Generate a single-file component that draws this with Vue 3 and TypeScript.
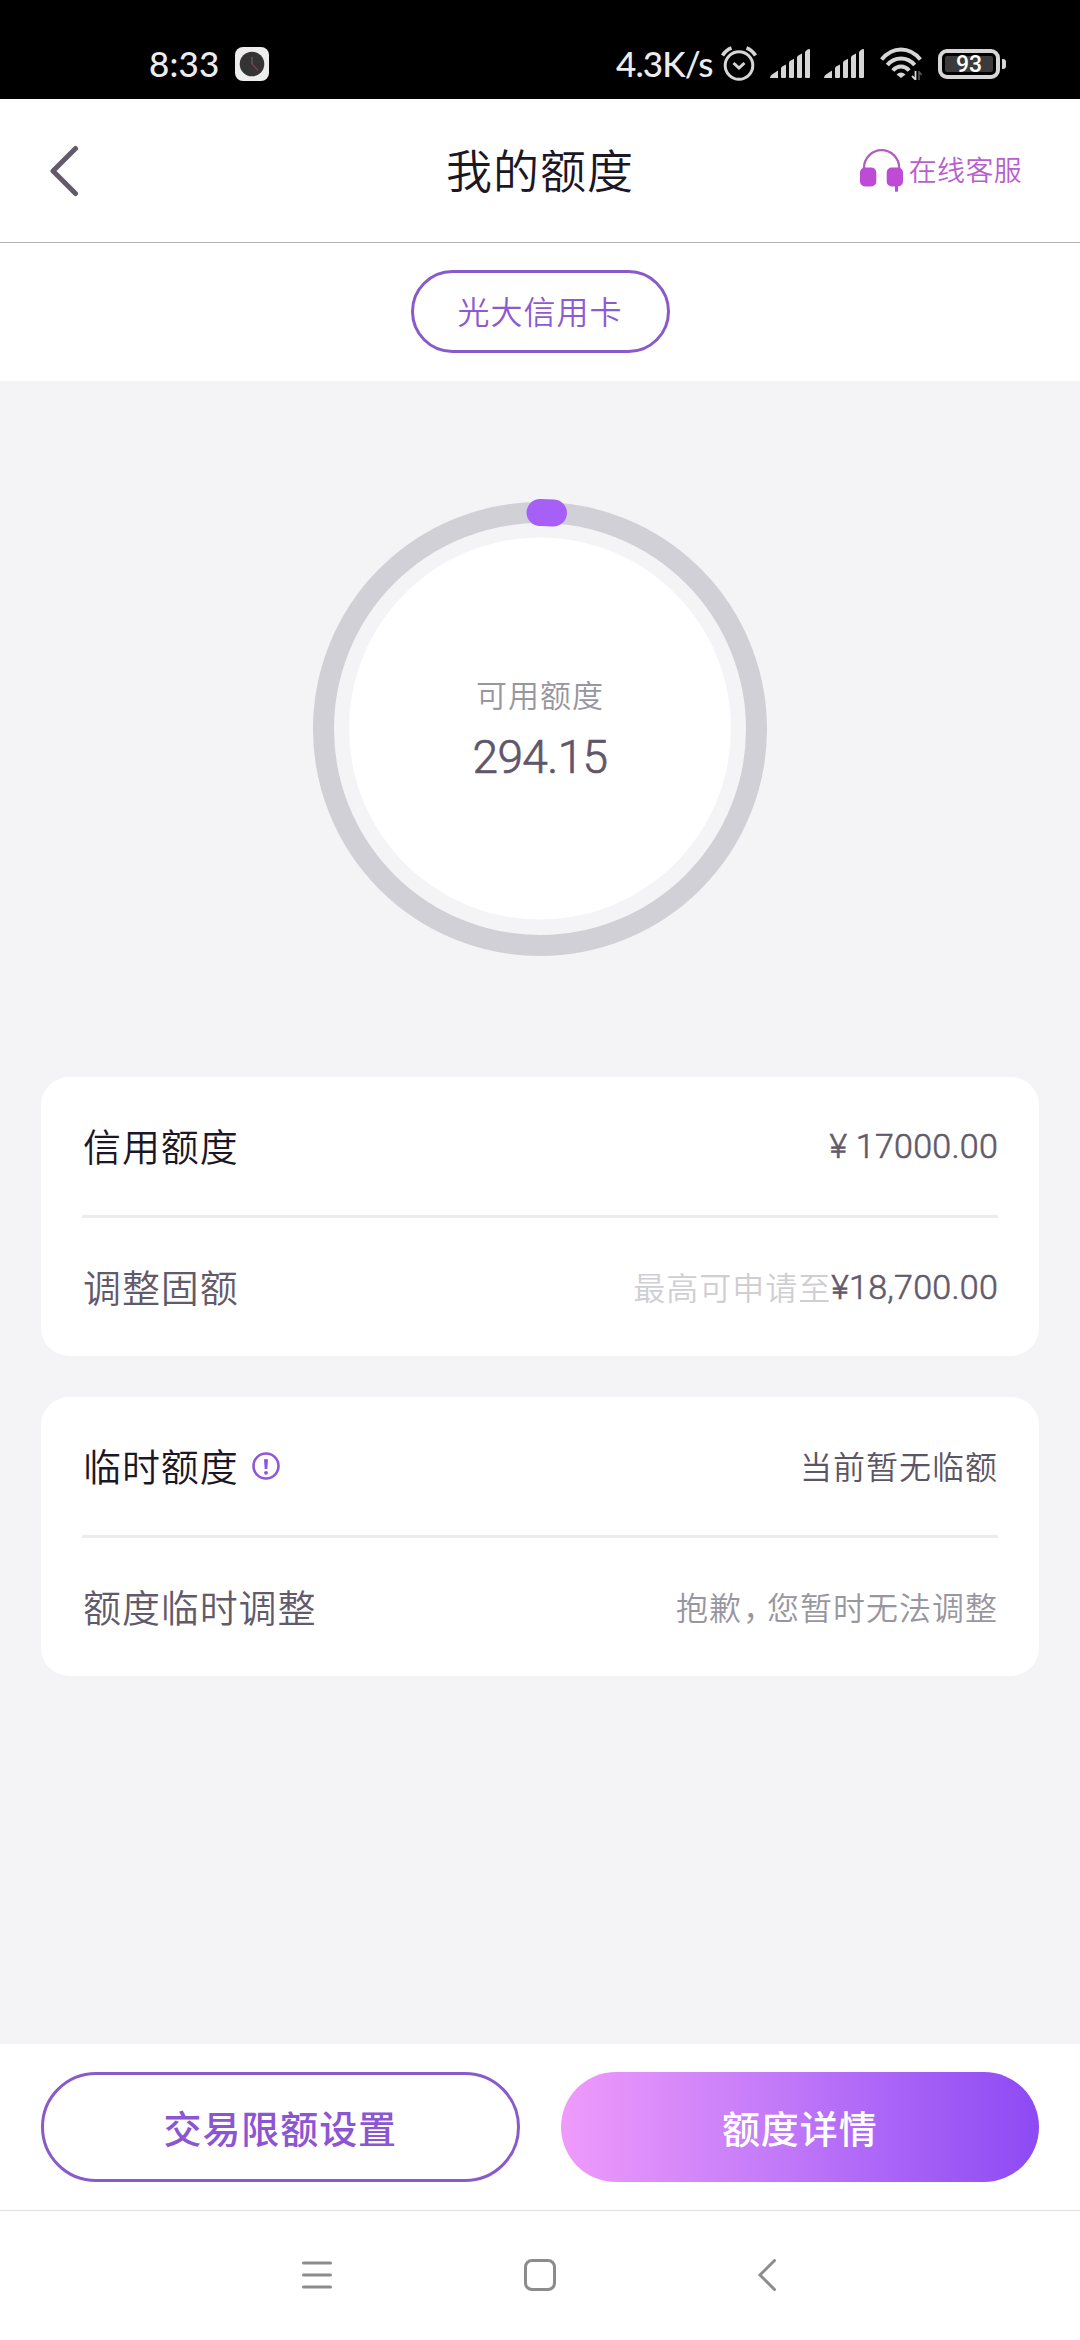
<script setup lang="ts">
import { ref } from 'vue'

interface Row {
  label: string
  value: string
  strong?: boolean
  info?: boolean
  hint?: string
  tone: 'amount' | 'text' | 'muted'
}

const time = ref('8:33')
const available = ref('294.15')

const cards: Row[][] = [
  [
    { label: '信用额度', value: '¥ 17000.00', strong: true, tone: 'amount' },
    { label: '调整固额', hint: '最高可申请至', value: '¥18,700.00', tone: 'amount' },
  ],
  [
    { label: '临时额度', value: '当前暂无临额', strong: true, info: true, tone: 'text' },
    { label: '额度临时调整', value: '抱歉，您暂时无法调整', tone: 'muted' },
  ],
]

const splitComma = (s: string): string[] => s.split(/(，)/)
</script>

<template>
  <div class="screen">
    <div class="status">
      <span class="time">{{ time }}</span>
      <svg class="clock-app" width="34" height="34" viewBox="0 0 34 34">
        <rect width="34" height="34" rx="8" fill="#ededed" />
        <circle cx="17" cy="17" r="12.3" fill="#353334" />
        <path d="M17 17V10" stroke="#5a5859" stroke-width="1.6" />
        <path d="M17 17L23 23.5" stroke="#7a3f45" stroke-width="1.4" />
      </svg>
      <span class="speed">4.3K/s</span>
      <svg class="alarm" width="36" height="36" viewBox="0 0 36 36" fill="none" stroke="#d6d6d6" stroke-width="3">
        <circle cx="18" cy="19.5" r="13.8" />
        <path d="M1.5 9.5Q5 4 10.500 2M34.500 9.500Q31 4 25.500 2" stroke-width="3.600" />
        <path d="M12.500 17L18 22L23.500 17" stroke-width="3" />
      </svg>
      <svg v-for="n in 2" :key="n" class="signal" width="41" height="30" viewBox="0 0 41 30" fill="#d6d6d6">
        <path d="M0 29Q0 26.500 2 25.500L8 21.500V29ZM11 19.500Q11 18 12.500 17.300L16 15.500V28Q16 29 15 29H12Q11 29 11 28ZM19 14Q19 12.500 20.300 11.800L24 9.700V28Q24 29 23 29H20Q19 29 19 28ZM27 8.500Q27 7.200 28.300 6.400L32 4.400V28Q32 29 31 29H28Q27 29 27 28ZM35 3.500Q35 2.200 36.300 1.400Q40 -1 40 1V28Q40 29 39 29H36Q35 29 35 28Z" />
      </svg>
      <svg class="wifi" width="44" height="34" viewBox="0 0 44 34" fill="none" stroke="#d6d6d6" stroke-width="4">
        <path d="M1.600 12.500Q10 2.500 21 2.500T40.400 12.500" />
        <path d="M7.300 18Q13 11.500 21 11.500T34.700 18" />
        <path d="M12.800 23.500Q16.500 19.500 21 19.500T29.200 23.500" />
        <path d="M16.500 27.500Q21 23.500 25.500 27.500L21 31Z" fill="#d6d6d6" stroke="none" />
        <path d="M35.500 24V33M35.500 32.500L32 29" stroke-width="1.800" />
        <path d="M39 33V24M39 24.500L41.500 28" stroke="#555" stroke-width="1.600" />
      </svg>
      <div class="battery">
        <span class="level">93</span>
      </div>
      <i class="tip"></i>
    </div>

    <header class="header">
      <svg class="back" width="30" height="52" viewBox="0 0 30 52" fill="none" stroke="#625a6b" stroke-width="5" stroke-linecap="round" stroke-linejoin="round">
        <path d="M25.500 3.500L3 26L25.500 48.500" />
      </svg>
      <h1>我的额度</h1>
      <div class="service">
        <svg width="44" height="44" viewBox="0 0 44 44">
          <path d="M4 20V19A17.600 17.800 0 0 1 39.200 19V20" fill="none" stroke="#b35cc4" stroke-width="2.300" />
          <rect x="0" y="18.500" width="16.300" height="19" rx="5" fill="#bd4bd6" />
          <rect x="26.700" y="18.500" width="16.300" height="19" rx="5" fill="#bd4bd6" />
          <path d="M36.500 36V42.700" stroke="#bd4bd6" stroke-width="3" />
        </svg>
        <span>在线客服</span>
      </div>
    </header>

    <div class="tabs">
      <div class="pill"><span>光大信用卡</span></div>
    </div>

    <main class="body">
      <div class="gauge">
        <svg class="ring" width="460" height="460" viewBox="0 0 460 460" fill="none">
          <circle cx="230" cy="230" r="216.500" stroke="#d2d0d7" stroke-width="21" />
          <circle cx="230" cy="229.500" r="191" fill="#fff" />
          <path d="M230 13.500A216.500 216.500 0 0 1 243.500 13.900" stroke="#a660f8" stroke-width="27" stroke-linecap="round" />
        </svg>
        <div class="gauge-text">
          <span class="gauge-label">可用额度</span>
          <span class="gauge-value">{{ available }}</span>
        </div>
      </div>

      <section v-for="(card, i) in cards" :key="i" class="card">
        <div v-for="row in card" :key="row.label" class="row">
          <span class="label" :class="{ strong: row.strong }">{{ row.label }}</span>
          <svg v-if="row.info" class="info" width="28" height="28" viewBox="0 0 28 28">
            <circle cx="14" cy="14" r="12.500" fill="none" stroke="#9058d8" stroke-width="2.600" />
            <path d="M12 7.500Q14 6.600 16 7.500L15.300 17H12.700Z" fill="#9050e0" />
            <circle cx="14" cy="20.800" r="1.900" fill="#9050e0" />
          </svg>
          <span class="right">
            <span v-if="row.hint" class="hint">{{ row.hint }}</span>
            <span :class="row.tone"><span v-for="(part, k) in splitComma(row.value)" :key="k" :class="{ comma: part === '，' }">{{ part }}</span></span>
          </span>
        </div>
      </section>
    </main>

    <footer class="actions">
      <div class="btn outline"><span>交易限额设置</span></div>
      <div class="btn filled"><span>额度详情</span></div>
    </footer>

    <nav class="nav">
      <svg width="34" height="34" viewBox="0 0 34 34" fill="none" stroke="#8c8c8c" stroke-width="3" stroke-linecap="round">
        <path d="M3.500 5H30.500M3.500 17H30.500M3.500 29H30.500" />
      </svg>
      <svg width="34" height="34" viewBox="0 0 34 34" fill="none" stroke="#8c8c8c" stroke-width="3">
        <rect x="2.500" y="2.500" width="29" height="29" rx="6.500" />
      </svg>
      <svg class="nav-back" width="34" height="34" viewBox="0 0 34 34" fill="none" stroke="#8c8c8c" stroke-width="3" stroke-linecap="round">
        <path d="M24.500 2.500L10 17L24.500 31.500" />
      </svg>
    </nav>
  </div>
</template>

<style>
body {
  margin: 0;
  background: #fff;
}
</style>

<style scoped>
.screen {
  width: 1080px;
  height: 2340px;
  display: flex;
  flex-direction: column;
  overflow: hidden;
  background: #fff;
  font-family: 'Noto Sans CJK SC', sans-serif;
  font-weight: 350;
  white-space: nowrap;
}

.status {
  height: 99px;
  flex: none;
  box-sizing: border-box;
  padding: 29px 0 0 149px;
  display: flex;
  align-items: center;
  background: #000;
  color: #ececec;
  font-family: Lato, sans-serif;
  font-size: 35px;
  font-weight: 500;
}
.time {
  width: 86px;
  line-height: 40px;
  letter-spacing: 0.2px;
}
.speed {
  width: 105px;
  margin-left: 347px;
  line-height: 40px;
  letter-spacing: -0.9px;
}
.time,
.speed {
  margin-top: -2px;
}
.clock-app,
.alarm,
.signal,
.wifi {
  flex: none;
}
.signal {
  margin-left: 13px;
}
.wifi {
  margin-left: 15px;
}
.battery {
  box-sizing: border-box;
  width: 62px;
  height: 30px;
  margin-left: 14px;
  padding: 3px;
  border: 4px solid #d6d6d6;
  border-radius: 9px;
  flex: none;
  display: flex;
}
.level {
  flex: 1;
  border-radius: 2px;
  background: #3b3b3b;
  color: #fff;
  font-family: Roboto, sans-serif;
  font-size: 23px;
  font-weight: 500;
  line-height: 17px;
  text-align: center;
}
.tip {
  width: 4px;
  height: 10px;
  margin-left: 2px;
  border-radius: 0 3px 3px 0;
  background: #d6d6d6;
}

.header {
  box-sizing: border-box;
  height: 144px;
  flex: none;
  display: grid;
  grid-template-columns: 1fr auto 1fr;
  align-items: center;
  border-bottom: 1px solid #b4b4b6;
}
.back {
  margin-left: 50px;
}
h1 {
  margin: -5px 0 0;
  color: #1b1726;
  font-size: 46px;
  font-weight: 350;
  line-height: 60px;
  letter-spacing: 1px;
}
.service {
  display: flex;
  align-items: center;
  justify-content: flex-end;
  gap: 5px;
  padding-right: 58px;
  color: #b95fcd;
  font-size: 28px;
  line-height: 40px;
  letter-spacing: 0.3px;
}
.service span {
  margin-top: -3px;
}

.tabs {
  box-sizing: border-box;
  height: 138px;
  flex: none;
  display: flex;
  justify-content: center;
  padding-top: 27px;
}
.pill {
  box-sizing: border-box;
  width: 259px;
  height: 83px;
  border: 3px solid #8a5acb;
  border-radius: 42px;
  color: #8d5bd0;
  font-size: 32px;
  line-height: 75px;
  letter-spacing: 1px;
  text-align: center;
}

.body {
  flex: 1;
  box-sizing: border-box;
  display: flex;
  flex-direction: column;
  gap: 41px;
  padding: 117.700px 41px 0;
  background: #f4f4f6;
}
.gauge {
  height: 460px;
  margin-bottom: 77.300px;
  display: grid;
  justify-items: center;
}
.ring,
.gauge-text {
  grid-area: 1 / 1;
}
.gauge-text {
  display: flex;
  flex-direction: column;
  align-items: center;
  padding-top: 171px;
}
.gauge-label {
  height: 50px;
  line-height: 47px;
  color: #98969e;
  font-size: 31px;
  letter-spacing: 1px;
}
.gauge-value {
  margin-top: 6px;
  line-height: 62px;
  color: #5f566b;
  font-family: Roboto, sans-serif;
  font-size: 46px;
  font-weight: 300;
  letter-spacing: -0.6px;
  -webkit-text-stroke: 0.7px currentColor;
}

.card {
  height: 279px;
  flex: none;
  box-sizing: border-box;
  padding: 0 41px;
  border-radius: 28px;
  background: #fff;
}
.row {
  height: 138px;
  display: flex;
  align-items: center;
}
.row + .row {
  border-top: 3px solid #ececee;
}
.label {
  margin: -2px 0 0 1px;
  color: #625a6b;
  font-size: 38px;
  line-height: 56px;
  letter-spacing: 0.900px;
}
.strong {
  color: #1b1726;
}
.info {
  margin-left: 13px;
}
.right {
  margin-left: auto;
  display: flex;
  align-items: center;
  font-size: 32px;
  line-height: 44px;
  letter-spacing: 1px;
}
.hint {
  margin-top: -2px;
  color: #cfcfd3;
}
.amount {
  color: #625a6b;
  font-family: Roboto, sans-serif;
  font-size: 34px;
  font-weight: 300;
  letter-spacing: 0.250px;
  -webkit-text-stroke: 0.6px currentColor;
  white-space: pre;
}
.text {
  margin-top: -2px;
  color: #5c5566;
}
.muted {
  margin-top: -2px;
  color: #98969e;
}
.comma {
  padding-left: 1px;
  letter-spacing: -8px;
}

.actions {
  height: 166px;
  flex: none;
  box-sizing: border-box;
  padding: 28px 41px;
  display: grid;
  grid-template-columns: 1fr 1fr;
  gap: 41px;
}
.btn {
  box-sizing: border-box;
  border-radius: 55px;
  font-size: 38px;
  font-weight: 500;
  letter-spacing: 0.900px;
  text-align: center;
}
.outline {
  border: 3px solid #8a5acb;
  color: #8b55d4;
  line-height: 103px;
}
.filled {
  background: linear-gradient(90deg, #ef9bfb 0%, #c87ef9 40%, #a963f7 70%, #8d4af3 100%);
  color: #fff;
  line-height: 109px;
}

.nav {
  height: 130px;
  flex: none;
  box-sizing: border-box;
  padding: 47px 0 0 300px;
  display: flex;
  gap: 189px;
  border-top: 1px solid #e2e2e2;
}
.nav-back {
  margin-left: 4px;
}
</style>
